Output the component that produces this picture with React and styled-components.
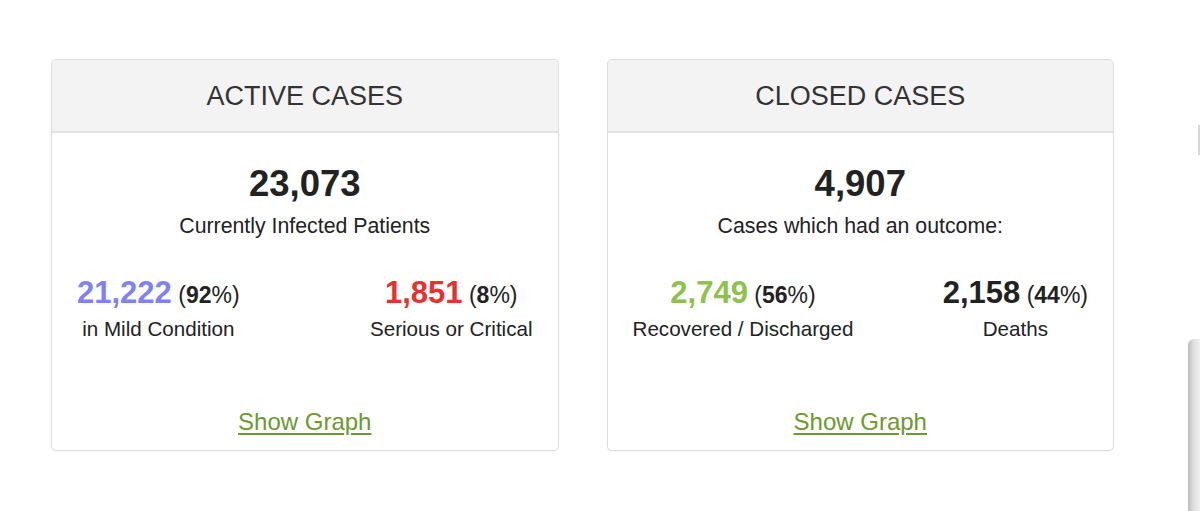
import styled, { createGlobalStyle } from "styled-components";

const GlobalStyle = createGlobalStyle`
  body {
    margin: 0;
    background: #ffffff;
    font-family: "Liberation Sans", Arial, Helvetica, sans-serif;
    color: #222;
  }
`;

const Page = styled.div`
  display: flex;
  align-items: flex-start;
  gap: 48px;
  padding: 59px 0 0 51px;
  height: 452px;
  overflow: hidden;
`;

const Card = styled.div`
  width: 507px;
  border: 1px solid #dcdcdc;
  border-radius: 5px;
  overflow: hidden;
  background: #fff;
  box-shadow: 0 1px 1px rgba(0, 0, 0, 0.04);
`;

const CardHeader = styled.div`
  height: 73px;
  padding-top: 2px;
  box-sizing: border-box;
  display: flex;
  align-items: center;
  justify-content: center;
  background: #f3f3f3;
  border-bottom: 2px solid #e3e3e3;
  font-size: 27px;
  color: #333;
`;

const CardBody = styled.div`
  padding: 31px 25px 14px;
  text-align: center;
`;

const BigNumber = styled.div`
  font-size: 36.5px;
  line-height: 40px;
  font-weight: bold;
  color: #222;
`;

const Caption = styled.div`
  margin-top: 10px;
  font-size: 21.3px;
  line-height: 24px;
  color: #222;
`;

const Split = styled.div`
  display: flex;
  justify-content: space-between;
  margin-top: 38px;
`;

const Stat = styled.div`
  text-align: center;
`;

const StatNumber = styled.div`
  font-size: 23px;
  line-height: 34px;
  color: #222;
  span.num {
    font-size: 31px;
    font-weight: bold;
    color: ${(p) => p.$color || "#222"};
  }
  strong {
    font-weight: bold;
  }
`;

const StatLabel = styled.div`
  margin-top: 5px;
  font-size: 20.6px;
  line-height: 24px;
  color: #222;
`;

const GraphLink = styled.a`
  display: inline-block;
  margin-top: 67px;
  font-size: 24px;
  line-height: 28px;
  color: #6b9a2f;
  text-decoration: underline;
  text-underline-offset: 3px;
  cursor: pointer;
`;

const Peek = styled.div`
  margin-left: 24px;
  padding-top: 66px;
  display: flex;
  flex-direction: column;
  align-items: flex-end;
  width: 14px;
`;

const PeekLine = styled.div`
  width: 2px;
  height: 30px;
  background: #d6d6d6;
`;

const PeekShape = styled.div`
  margin-top: 184px;
  width: 12px;
  height: 175px;
  border-radius: 6px 0 0 0;
  background: linear-gradient(90deg, #a8a8a8 0%, #d4d4d4 45%, #ececec 100%);
  opacity: 0.75;
`;

const Percent = ({ value }) => (
  <>
    {" "}(<strong>{value}</strong>%)
  </>
);

const CaseCard = ({ title, total, caption, left, right }) => (
  <Card>
    <CardHeader>{title}</CardHeader>
    <CardBody>
      <BigNumber>{total}</BigNumber>
      <Caption>{caption}</Caption>
      <Split>
        {[left, right].map((s) => (
          <Stat key={s.label}>
            <StatNumber $color={s.color}>
              <span className="num">{s.value}</span>
              <Percent value={s.pct} />
            </StatNumber>
            <StatLabel>{s.label}</StatLabel>
          </Stat>
        ))}
      </Split>
      <GraphLink>Show Graph</GraphLink>
    </CardBody>
  </Card>
);

export default function App() {
  return (
    <>
      <GlobalStyle />
      <Page>
        <CaseCard
          title="ACTIVE CASES"
          total="23,073"
          caption="Currently Infected Patients"
          left={{ value: "21,222", pct: "92", label: "in Mild Condition", color: "#8080f8" }}
          right={{ value: "1,851", pct: "8", label: "Serious or Critical", color: "#e8312c" }}
        />
        <CaseCard
          title="CLOSED CASES"
          total="4,907"
          caption="Cases which had an outcome:"
          left={{ value: "2,749", pct: "56", label: "Recovered / Discharged", color: "#8dc24c" }}
          right={{ value: "2,158", pct: "44", label: "Deaths", color: "#222" }}
        />
        <Peek>
          <PeekLine />
          <PeekShape />
        </Peek>
      </Page>
    </>
  );
}
